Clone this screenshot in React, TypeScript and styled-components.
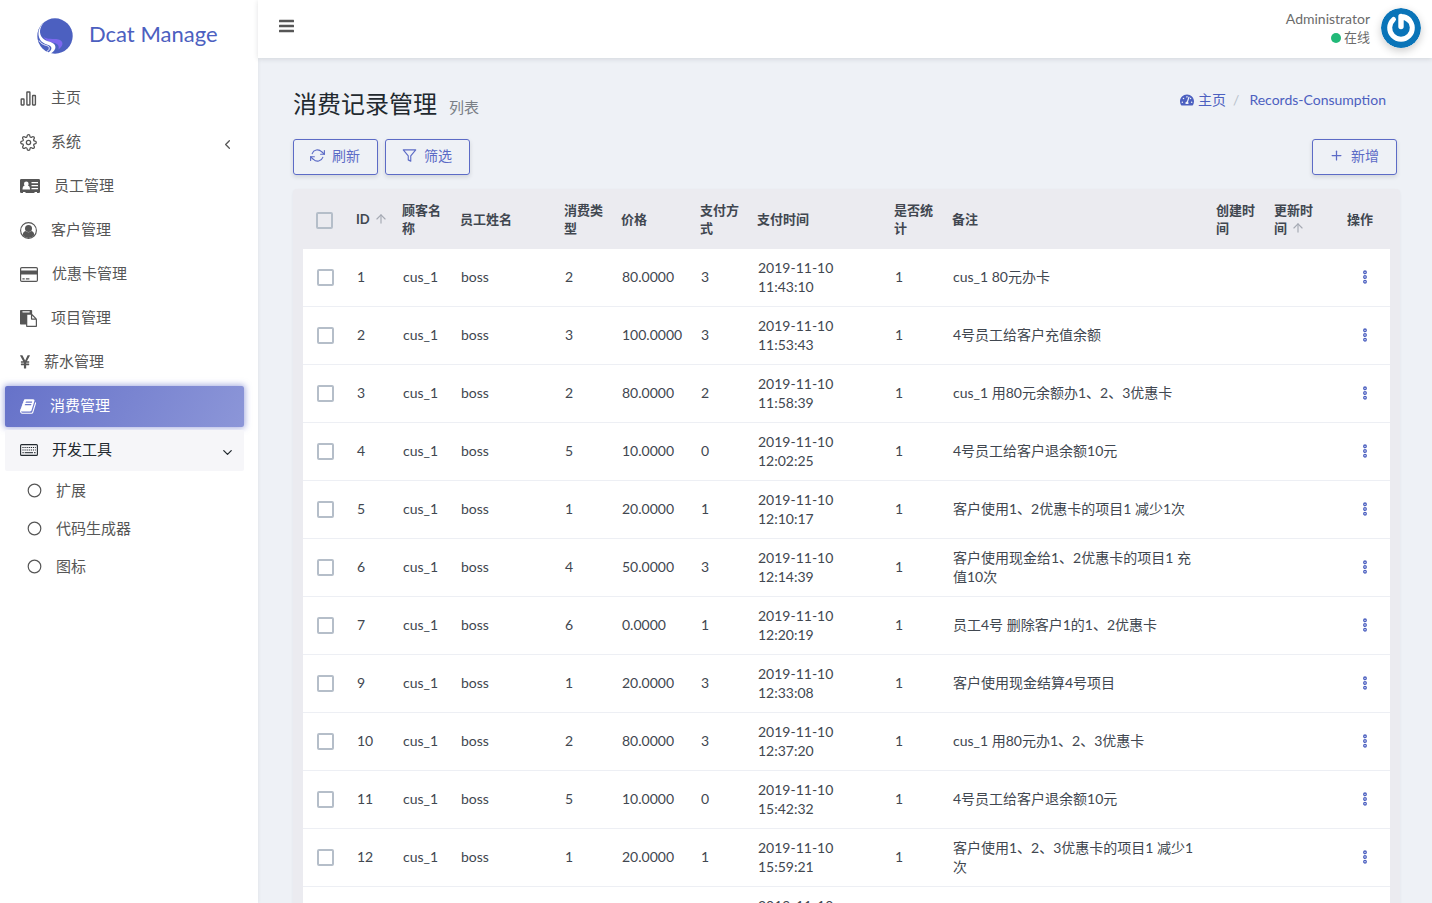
import React from 'react';
import styled, { createGlobalStyle, css } from 'styled-components';
import { FaTachometerAlt } from 'react-icons/fa';
import {
  FiArrowUp,
  FiChevronDown,
  FiChevronLeft,
  FiFilter,
  FiPlus,
  FiRefreshCw,
  FiSettings,
} from 'react-icons/fi';

const primary = '#5c6bc6';
const brand = '#4c60c0';
const bodyText = '#414750';

const GlobalStyle = createGlobalStyle`
  *, *::before, *::after { box-sizing: border-box; }
  body {
    margin: 0;
    background: #eef1f6;
    color: ${bodyText};
    font: 14px/19px Lato, "Noto Sans CJK SC", sans-serif;
  }
  button, input { font: inherit; }
  a { color: inherit; text-decoration: none; }
`;

const Shell = styled.div`
  display: flex;
  height: 100vh;
  overflow: hidden;
`;

const Sidebar = styled.aside`
  flex: 0 0 258px;
  background: #fff;
  box-shadow: 0 0 4px rgba(34, 41, 47, 0.08);
`;

const Brand = styled.a`
  display: flex;
  align-items: center;
  gap: 16px;
  height: 72px;
  padding-left: 37px;
  color: ${brand};
  font-size: 22px;
  line-height: 28px;
`;

const BrandName = styled.span`
  padding-bottom: 4px;
`;

const Menu = styled.ul`
  margin: 0;
  padding: 6px 14px 0 5px;
  list-style: none;
`;

const MenuItem = styled.li`
  margin-bottom: 3px;
`;

const MenuLabel = styled.span`
  padding-bottom: 2px;
`;

const MenuLink = styled.a<{ $state?: 'active' | 'open' }>`
  display: flex;
  align-items: center;
  gap: 14px;
  height: 41px;
  padding: 0 9px 1px 15px;
  border-radius: 2px;
  color: #565656;
  font-size: 15px;
  line-height: 20px;
  ${({ $state }) =>
    $state === 'active' &&
    css`
      color: #fff;
      background: linear-gradient(118deg, #6672c9, #8c96d8);
      box-shadow: 0 0 6px 1px rgba(102, 114, 201, 0.6);
    `}
  ${({ $state }) =>
    $state === 'open' &&
    css`
      color: #22292f;
      background: #f6f6f9;
    `}
`;

const Arrow = styled.span`
  display: flex;
  margin-left: auto;
  padding-top: 4px;
`;

const SubMenu = styled.ul`
  margin: 0;
  padding: 0;
  list-style: none;
`;

const SubLink = styled.a`
  display: flex;
  align-items: center;
  gap: 14px;
  height: 38px;
  padding-left: 22px;
  color: #565656;
  font-size: 15px;
  line-height: 20px;
`;

const Page = styled.div`
  display: flex;
  flex: 1;
  flex-direction: column;
  min-width: 0;
`;

const Navbar = styled.header`
  display: flex;
  flex: 0 0 58px;
  align-items: center;
  justify-content: space-between;
  padding: 0 11px 2px 20px;
  background: #fff;
  box-shadow: 0 1px 5px rgba(34, 41, 47, 0.14);
`;

const IconButton = styled.button`
  display: inline-flex;
  padding: 0;
  border: 0;
  background: none;
  color: inherit;
  cursor: pointer;
`;

const MenuToggle = styled(IconButton)`
  margin-bottom: 4px;
  color: #565656;
`;

const User = styled.a`
  display: flex;
  align-items: center;
  gap: 11px;
  color: #6b6b6b;
  text-align: right;
`;

const UserStatus = styled.span`
  display: flex;
  align-items: center;
  justify-content: flex-end;
  gap: 3px;
  font-size: 13px;
`;

const Dot = styled.i`
  width: 10px;
  height: 10px;
  border-radius: 50%;
  background: #21b978;
`;

const Avatar = styled.svg`
  border-radius: 50%;
  box-shadow: 0 3px 8px rgba(0, 0, 0, 0.2);
`;

const Content = styled.main`
  flex: 1;
  min-height: 0;
  padding: 28px 32px 0 35px;
  overflow-y: auto;
  scrollbar-width: none;
`;

const Heading = styled.div`
  display: flex;
  align-items: flex-end;
  justify-content: space-between;
  height: 35px;
  padding-right: 14px;
`;

const Title = styled.h1`
  margin: 0;
  color: #22292f;
  font-size: 24px;
  font-weight: 400;
  line-height: 28px;
`;

const Subtitle = styled.small`
  margin-left: 12px;
  color: #7a7f86;
  font-size: 15px;
`;

const Breadcrumb = styled.nav`
  display: flex;
  align-items: center;
  gap: 7px;
  padding-bottom: 12px;
  color: ${brand};
`;

const Crumb = styled.a`
  display: flex;
  align-items: center;
  gap: 4px;
`;

const Separator = styled.span`
  margin-right: 3px;
  color: #b8c2cc;
`;

const Toolbar = styled.div`
  display: flex;
  gap: 7px;
  padding: 18px 3px 14px 0;
`;

const OutlineButton = styled.button<{ $end?: boolean }>`
  display: flex;
  align-items: center;
  gap: 7px;
  height: 36px;
  margin-left: ${({ $end }) => ($end ? 'auto' : '0')};
  padding: 0 17px 3px 16px;
  border: 1px solid ${primary};
  border-radius: 3px;
  background: transparent;
  color: ${primary};
  box-shadow: 0 2px 4px rgba(34, 41, 47, 0.14);
  cursor: pointer;
`;

const Card = styled.section`
  padding: 0 10px;
  border-radius: 4px;
  background: #ebebf0;
  box-shadow: 0 1px 3px rgba(34, 41, 47, 0.06);
`;

const Table = styled.table`
  width: 100%;
  border-spacing: 0;
  table-layout: fixed;
`;

const Th = styled.th<{ $nowrap?: boolean }>`
  height: 60px;
  padding: 0 8px 0 10px;
  font-size: 13px;
  font-weight: 700;
  line-height: 18px;
  text-align: left;
  white-space: ${({ $nowrap }) => ($nowrap ? 'nowrap' : 'normal')};
`;

const Td = styled.td`
  height: 58px;
  padding: 0 5px 2px 11px;
  border-bottom: 1px solid #edeff4;
  background: #fff;
`;

const CheckTh = styled(Th)`
  padding-top: 2px;
  padding-left: 13px;
`;

const CheckTd = styled(Td)`
  padding-bottom: 0;
  padding-left: 14px;
`;

const ActionTh = styled(Th)`
  padding-left: 17px;
`;

const ActionTd = styled(Td)`
  padding-left: 32px;
`;

const Checkbox = styled.input`
  display: block;
  width: 17px;
  height: 17px;
  margin: 0;
  border: 2px solid #b5bec9;
  border-radius: 2px;
  appearance: none;
  &:checked { background: ${primary}; }
`;

const SortLink = styled.a`
  margin-left: 4px;
  color: #a5a9b3;
  svg { vertical-align: -2px; }
`;

const RowMenu = styled(IconButton)`
  display: flex;
  color: ${brand};
`;

const Logo = () => (
  <svg width="36" height="36" viewBox="0 0 36 36" aria-hidden="true">
    <circle cx="18" cy="18" r="17.700" fill={brand} />
    <path fill="#7b68ee" d="M6.500 18.500C10 22.300 16 20 21.500 21.500C26 22.800 27.500 27 21.500 31.500C22.500 27.500 20.500 25.500 16 24.800C11 24 8 22 6.500 18.500Z" />
    <path fill="#fff" d="M7.300 3.800C2.500 9.500 1.500 15.500 5.500 20C9 24 15 23.300 17.500 26.500C19.800 30 17.500 33 14 35.300C12.500 35.300 12 35 11 34.700C14.500 32.500 15.300 30 13.500 28.200C11 26 6 26.500 3 21.500C0 16 1.500 9 7.300 3.800Z" />
    <path fill="none" stroke="#fff" strokeWidth=".9" d="M2 22.500C5.500 28.500 11.500 26.500 12.200 29.600C12.600 31.300 11.500 32.700 9.800 33.500" />
  </svg>
);

const ChartIcon = () => (
  <svg width="17" height="17" viewBox="0 0 17 17" fill="none" stroke="currentColor" strokeWidth="1.400">
    <rect x="1.200" y="9" width="2.800" height="6" rx=".4" />
    <rect x="6.900" y="2" width="3" height="13" rx=".4" />
    <rect x="12.600" y="5.500" width="2.800" height="9.500" rx=".4" />
  </svg>
);

const AddressCardIcon = () => (
  <svg width="20" height="16" viewBox="0 0 20 16">
    <path fill="currentColor" fillRule="evenodd" d="M1.300 1H18.700Q20 1 20 2.300V13.700Q20 15 18.700 15H17V14H14.500V15H5.500V14H3V15H1.300Q0 15 0 13.700V2.300Q0 1 1.300 1ZM2.500 11.500H10Q10 8 8 7.700Q8.600 6.900 8.600 5.800Q8.600 3.600 6.300 3.600Q4 3.600 4 5.800Q4 6.900 4.600 7.700Q2.500 8 2.500 11.500ZM11.500 4V5.300H18V4ZM11.500 7V8.300H18V7ZM11.500 10V11.300H18V10Z" />
  </svg>
);

const UserCircleIcon = () => (
  <svg width="17" height="17" viewBox="0 0 17 17">
    <circle cx="8.500" cy="8.500" r="7.900" fill="none" stroke="currentColor" strokeWidth="1.100" />
    <circle cx="8.500" cy="6.500" r="3.500" fill="currentColor" />
    <path fill="currentColor" d="M2.700 13.200Q3 9.600 5.600 9.100Q8.500 11.600 11.400 9.100Q14 9.600 14.300 13.200Q12 16 8.500 16T2.700 13.200Z" />
  </svg>
);

const CreditCardIcon = () => (
  <svg width="18" height="15" viewBox="0 0 18 15">
    <rect x=".6" y=".6" width="16.800" height="13.800" rx="1.200" fill="none" stroke="currentColor" strokeWidth="1.200" />
    <path fill="currentColor" d="M.6 3.500H17.400V7.500H.6ZM2.400 11.200H4.700V12.400H2.400ZM5.900 11.200H9.400V12.400H5.900Z" />
  </svg>
);

const PasteIcon = () => (
  <svg width="17" height="17" viewBox="0 0 1792 1792" fill="currentColor">
    <path d="M768 1664h896v-640h-416q-40 0-68-28t-28-68v-416h-384v1152zm256-1440v-64q0-13-9.500-22.500t-22.500-9.500h-704q-13 0-22.500 9.500t-9.500 22.500v64q0 13 9.500 22.500t22.500 9.500h704q13 0 22.500-9.500t9.500-22.500zm256 672h299l-299-299v299zm512 128v672q0 40-28 68t-68 28h-960q-40 0-68-28t-28-68v-160h-544q-40 0-68-28t-28-68v-1344q0-40 28-68t68-28h1088q40 0 68 28t28 68v328q21 13 36 28l408 408q28 28 48 76t20 88z" />
  </svg>
);

const YenIcon = () => (
  <svg width="10" height="17" viewBox="380 0 1030 1792" fill="currentColor">
    <path d="M985.500 1536h-172q-13 0-22.500-9t-9.500-23v-330h-288q-13 0-22.500-9t-9.500-23v-103q0-13 9.500-22.500t22.500-9.500h288v-85h-288q-13 0-22.500-9t-9.500-23v-104q0-13 9.500-22.500t22.500-9.500h214l-321-578q-8-16 0-32 10-16 28-16h194q19 0 29 18l215 425q19 38 56 125 10-24 30.500-68t27.500-61l191-420q8-19 29-19h191q17 0 27 16 9 14 1 31l-313 579h215q13 0 22.500 9.500t9.500 22.500v104q0 14-9.500 23t-22.500 9h-290v85h290q13 0 22.500 9.500t9.500 22.500v103q0 14-9.500 23t-22.500 9h-290v330q0 13-9.500 22.500t-22.500 9.500z" />
  </svg>
);

const BookIcon = () => (
  <svg width="16" height="17" viewBox="60 64 1668 1664" fill="currentColor">
    <path d="M1703 478q40 57 18 129l-275 906q-19 64-76.500 107.500t-122.500 43.500h-923q-77 0-148.500-53.500t-99.500-131.500q-24-67-2-127 0-4 3-27t4-37q1-8-3-21.500t-3-19.500q2-11 8-21t16.500-23.500 16.500-23.500q23-38 45-91.500t30-91.500q3-10 .5-30t-.5-28q3-11 17-28t17-23q21-36 42-92t25-90q1-9-2.500-32t.5-28q4-13 22-30.500t22-22.500q19-26 42.500-84.500t27.500-96.500q1-8-3-25.500t-2-26.500q2-8 9-18t18-23 17-21q8-12 16.500-30.500t15-35 16-36 19.500-32 26.500-23.500 36-11.500 47.500 5.500l-1 3q38-9 51-9h761q74 0 114 56t18 130l-274 906q-36 119-71.500 153.500t-128.500 34.500h-869q-27 0-38 15-11 16-1 43 24 70 144 70h923q29 0 56-15.500t35-41.500l300-987q7-22 5-57 38 15 59 43zm-1064 2q-4 13 2 22.500t20 9.500h608q13 0 25.500-9.500t16.500-22.500l21-64q4-13-2-22.500t-20-9.500h-608q-13 0-25.500 9.500t-16.500 22.500zm-83 256q-4 13 2 22.500t20 9.500h608q13 0 25.500-9.500t16.500-22.500l21-64q4-13-2-22.500t-20-9.500h-608q-13 0-25.500 9.500t-16.500 22.500z" />
  </svg>
);

const KeyboardIcon = () => (
  <svg width="18" height="12" viewBox="0 0 18 12" fill="none" stroke="currentColor">
    <rect x=".6" y=".6" width="16.800" height="10.800" rx="1" strokeWidth="1.100" />
    <path strokeWidth="1" strokeDasharray="1.200 .9" d="M2.400 3.500H15.800M2.400 6H15.800" />
    <path strokeWidth="1" d="M2.400 8.700H3.800M4.700 8.700H13M14 8.700H15.600" />
  </svg>
);

const CircleIcon = () => (
  <svg width="15" height="15" viewBox="0 0 15 15">
    <circle cx="7.500" cy="7.500" r="6.300" fill="none" stroke="currentColor" strokeWidth="1.200" />
  </svg>
);

const BarsIcon = () => (
  <svg width="16" height="14" viewBox="0 0 16 14" fill="currentColor">
    <rect x="1" y=".7" width="15" height="2.500" rx=".5" />
    <rect x="1" y="5.700" width="15" height="2.500" rx=".5" />
    <rect x="1" y="10.700" width="15" height="2.500" rx=".5" />
  </svg>
);

const MoreIcon = () => (
  <svg width="6" height="14" viewBox="0 0 6 14" fill="none" stroke="currentColor" strokeWidth="1.300">
    <circle cx="3" cy="2.300" r="1.300" />
    <circle cx="3" cy="7" r="1.300" />
    <circle cx="3" cy="11.700" r="1.300" />
  </svg>
);

const menu = [
  { label: '主页', icon: <ChartIcon /> },
  { label: '系统', icon: <FiSettings size={17} strokeWidth={1.8} />, arrow: <FiChevronLeft size={15} /> },
  { label: '员工管理', icon: <AddressCardIcon /> },
  { label: '客户管理', icon: <UserCircleIcon /> },
  { label: '优惠卡管理', icon: <CreditCardIcon /> },
  { label: '项目管理', icon: <PasteIcon /> },
  { label: '薪水管理', icon: <YenIcon /> },
  { label: '消费管理', icon: <BookIcon />, state: 'active' as const },
  { label: '开发工具', icon: <KeyboardIcon />, state: 'open' as const, arrow: <FiChevronDown size={15} /> },
];

const columns = [43, 46, 58, 104, 57, 79, 57, 137, 58, undefined, 58, 66, 60];

type Row = [number, number, string, number, string, string];

// id, consumption type, price, payment method, paid at, remark
const rows: Row[] = [
  [1, 2, '80.0000', 3, '2019-11-10 11:43:10', 'cus_1 80元办卡'],
  [2, 3, '100.0000', 3, '2019-11-10 11:53:43', '4号员工给客户充值余额'],
  [3, 2, '80.0000', 2, '2019-11-10 11:58:39', 'cus_1 用80元余额办1、2、3优惠卡'],
  [4, 5, '10.0000', 0, '2019-11-10 12:02:25', '4号员工给客户退余额10元'],
  [5, 1, '20.0000', 1, '2019-11-10 12:10:17', '客户使用1、2优惠卡的项目1 减少1次'],
  [6, 4, '50.0000', 3, '2019-11-10 12:14:39', '客户使用现金给1、2优惠卡的项目1 充值10次'],
  [7, 6, '0.0000', 1, '2019-11-10 12:20:19', '员工4号 删除客户1的1、2优惠卡'],
  [9, 1, '20.0000', 3, '2019-11-10 12:33:08', '客户使用现金结算4号项目'],
  [10, 2, '80.0000', 3, '2019-11-10 12:37:20', 'cus_1 用80元办1、2、3优惠卡'],
  [11, 5, '10.0000', 0, '2019-11-10 15:42:32', '4号员工给客户退余额10元'],
  [12, 1, '20.0000', 1, '2019-11-10 15:59:21', '客户使用1、2、3优惠卡的项目1 减少1次'],
  [13, 1, '20.0000', 1, '2019-11-10 16:02:45', '客户使用现金结算4号项目'],
];

const Sort = ({ label }: { label: string }) => (
  <SortLink href="#" aria-label={label}>
    <FiArrowUp size={14} />
  </SortLink>
);

export default function App() {
  return (
    <>
      <GlobalStyle />
      <Shell>
        <Sidebar>
          <Brand href="#">
            <Logo />
            <BrandName>Dcat Manage</BrandName>
          </Brand>
          <Menu>
            {menu.map((item) => (
              <MenuItem key={item.label}>
                <MenuLink href="#" $state={item.state}>
                  {item.icon}
                  <MenuLabel>{item.label}</MenuLabel>
                  {item.arrow && <Arrow>{item.arrow}</Arrow>}
                </MenuLink>
                {item.state === 'open' && (
                  <SubMenu>
                    {['扩展', '代码生成器', '图标'].map((label) => (
                      <li key={label}>
                        <SubLink href="#">
                          <CircleIcon />
                          <span>{label}</span>
                        </SubLink>
                      </li>
                    ))}
                  </SubMenu>
                )}
              </MenuItem>
            ))}
          </Menu>
        </Sidebar>
        <Page>
          <Navbar>
            <MenuToggle aria-label="Toggle menu">
              <BarsIcon />
            </MenuToggle>
            <User href="#">
              <div>
                <div>Administrator</div>
                <UserStatus>
                  <Dot />
                  在线
                </UserStatus>
              </div>
              <Avatar width="40" height="40" viewBox="0 0 40 40" aria-hidden="true">
                <circle cx="20" cy="20" r="20" fill="#0a74b8" />
                <path d="M12.500 11.500A11.300 11.300 0 1 0 27.500 11.500" fill="none" stroke="#fff" strokeWidth="5" strokeLinecap="round" />
                <path d="M20 8.500V18.500M20 8.800Q25 9 28 12" fill="none" stroke="#fff" strokeWidth="5.400" strokeLinecap="round" />
              </Avatar>
            </User>
          </Navbar>
          <Content>
            <Heading>
              <Title>
                消费记录管理<Subtitle>列表</Subtitle>
              </Title>
              <Breadcrumb>
                <Crumb href="#">
                  <FaTachometerAlt size={14} />
                  主页
                </Crumb>
                <Separator>/</Separator>
                <Crumb href="#">Records-Consumption</Crumb>
              </Breadcrumb>
            </Heading>
            <Toolbar>
              <OutlineButton>
                <FiRefreshCw size={15} strokeWidth={1.8} />
                刷新
              </OutlineButton>
              <OutlineButton>
                <FiFilter size={15} strokeWidth={1.8} />
                筛选
              </OutlineButton>
              <OutlineButton $end>
                <FiPlus size={15} />
                新增
              </OutlineButton>
            </Toolbar>
            <Card>
              <Table>
                <colgroup>
                  {columns.map((width, i) => (
                    <col key={i} width={width} />
                  ))}
                </colgroup>
                <thead>
                  <tr>
                    <CheckTh>
                      <Checkbox type="checkbox" aria-label="Select all" />
                    </CheckTh>
                    <Th $nowrap>
                      ID
                      <Sort label="Sort by ID" />
                    </Th>
                    <Th>顾客名称</Th>
                    <Th>员工姓名</Th>
                    <Th>消费类型</Th>
                    <Th>价格</Th>
                    <Th>支付方式</Th>
                    <Th>支付时间</Th>
                    <Th>是否统计</Th>
                    <Th>备注</Th>
                    <Th>创建时间</Th>
                    <Th>
                      更新时间
                      <Sort label="Sort by update time" />
                    </Th>
                    <ActionTh>操作</ActionTh>
                  </tr>
                </thead>
                <tbody>
                  {rows.map(([id, type, price, method, paidAt, remark]) => (
                    <tr key={id}>
                      <CheckTd>
                        <Checkbox type="checkbox" aria-label={`Select ${id}`} />
                      </CheckTd>
                      <Td>{id}</Td>
                      <Td>cus_1</Td>
                      <Td>boss</Td>
                      <Td>{type}</Td>
                      <Td>{price}</Td>
                      <Td>{method}</Td>
                      <Td>{paidAt}</Td>
                      <Td>1</Td>
                      <Td>{remark}</Td>
                      <Td />
                      <Td />
                      <ActionTd>
                        <RowMenu aria-label={`Actions ${id}`}>
                          <MoreIcon />
                        </RowMenu>
                      </ActionTd>
                    </tr>
                  ))}
                </tbody>
              </Table>
            </Card>
          </Content>
        </Page>
      </Shell>
    </>
  );
}
